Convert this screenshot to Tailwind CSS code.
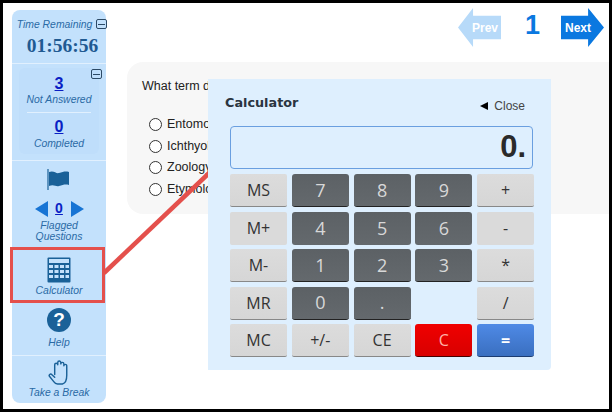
<!DOCTYPE html>
<html lang="en">
<head>
  <meta charset="UTF-8" />
  <title>Calculator</title>
  <script src="https://cdn.jsdelivr.net/npm/@tailwindcss/browser@4"></script>
</head>
<body class="bg-black font-['Liberation_Sans',sans-serif]">
  <div class="relative w-[612px] h-[412px] overflow-hidden">
    <div class="absolute inset-[3px] bg-white"></div>

    <!-- Page -->
    <div class="relative flex w-[612px] h-[412px] pt-[10px] pl-[12px] pr-[3px]">

      <!-- Sidebar -->
      <aside class="w-[94px] h-[393px] shrink-0 flex flex-col items-center rounded-lg bg-[#c3e1fc] text-[#2a6aa5] italic text-[10.400px] leading-[11px]">
        <div class="w-full h-[54px] border-b border-[#e1f0fe] relative flex flex-col items-center">
          <span class="mt-[9px] -ml-[9px]">Time Remaining</span>
          <span class="absolute -right-[1px] top-[9px] w-[11px] h-[10px] border border-[#2c4a66] rounded-[2px] flex items-center justify-center"><span class="w-[7px] h-px bg-[#2c4a66]"></span></span>
          <span class="mt-[6px] ml-[7px] not-italic font-bold font-['Liberation_Serif',serif] text-[19.500px] leading-[20px] text-[#1f5a92]">01:56:56</span>
        </div>
        <div class="w-full h-[97px] border-b border-[#e1f0fe] relative px-[7px] pt-[4px]">
          <div class="h-[86px] rounded-md bg-[#bfdefb] flex flex-col items-center">
            <a href="#" class="mt-[7px] not-italic font-bold text-[16px] leading-[18px] text-[#0a1fc4] underline">3</a>
            <span class="mt-[1px] text-[#2a6aa5]">Not Answered</span>
            <span class="w-[64px] h-px bg-[#e1f0fe] mt-[7px]"></span>
            <a href="#" class="mt-[5px] not-italic font-bold text-[16px] leading-[18px] text-[#0a1fc4] underline">0</a>
            <span class="mt-[2px]">Completed</span>
          </div>
          <span class="absolute right-[4px] top-[5px] w-[11px] h-[10px] border border-[#2c4a66] rounded-[2px] flex items-center justify-center"><span class="w-[7px] h-px bg-[#2c4a66]"></span></span>
        </div>
        <div class="w-full h-[86px] flex flex-col items-center pt-[8px]">
          <svg width="24" height="21" viewBox="0 0 24 21"><path d="M1 0v21" stroke="#1a6198" stroke-width="1.2"/><path d="M2 3c5-2 7 2 10 1 4-1 6-2 10-1v13c-4-1-6 0-10 1-3 1-5-2-10 0z" fill="#1a6198"/></svg>
          <div class="flex items-center gap-[3px] mt-[10px] h-[17px]">
            <span class="w-0 h-0 border-y-[8px] border-y-transparent border-r-[13px] border-r-[#1774d4]"></span>
            <a href="#" class="w-[17px] text-center not-italic font-bold text-[14px] text-[#0a1fc4] underline">0</a>
            <span class="w-0 h-0 border-y-[8px] border-y-transparent border-l-[13px] border-l-[#1774d4]"></span>
          </div>
          <span class="mt-[4px] text-center leading-[10.500px]">Flagged<br />Questions</span>
        </div>
        <div class="w-full h-[54px] mt-[3px] flex flex-col items-center pt-[7px]">
          <svg width="24" height="26" viewBox="0 0 24 26"><rect x="0.500" y="0.500" width="23" height="25" rx="1" fill="#1a6198"/><rect x="2" y="2" width="20" height="4" fill="#c3e1fc"/><g fill="#c3e1fc"><rect x="2" y="8" width="4" height="3"/><rect x="7.500" y="8" width="4" height="3"/><rect x="13" y="8" width="4" height="3"/><rect x="18.500" y="8" width="3.500" height="3"/><rect x="2" y="13" width="4" height="3"/><rect x="7.500" y="13" width="4" height="3"/><rect x="13" y="13" width="4" height="3"/><rect x="18.500" y="13" width="3.500" height="3"/><rect x="2" y="18" width="4" height="3"/><rect x="7.500" y="18" width="4" height="3"/><rect x="13" y="18" width="4" height="3"/><rect x="18.500" y="18" width="3.500" height="3"/></g></svg>
          <span class="mt-[2px]">Calculator</span>
        </div>
        <div class="w-full h-[50px] mt-[2px] border-b border-[#e1f0fe] flex flex-col items-center pt-[2px]">
          <span class="w-[24px] h-[24px] rounded-full bg-[#1a6198] text-white not-italic font-bold text-[19px] leading-[24px] text-center">?</span>
          <span class="mt-[5px]">Help</span>
        </div>
        <div class="w-full flex flex-col items-center pt-[4px]">
          <svg width="22" height="25" viewBox="0 0 23 26" fill="none" stroke="#1a6198" stroke-width="1.500" stroke-linejoin="round" stroke-linecap="round"><path d="M7 15V5a1.600 1.600 0 0 1 3.200 0V2.600a1.600 1.600 0 0 1 3.200 0V4a1.600 1.600 0 0 1 3.200 0v2a1.500 1.500 0 0 1 3 0v10c0 5-2 8.500-4.500 9H10c-2 0-3-1-4-2.500L1.500 17c-1-1.500 1-3 2.300-2L7 18"/></svg>
          <span class="mt-[2px]">Take a Break</span>
        </div>
      </aside>

      <!-- Main -->
      <main class="flex-1 relative">
        <div class="flex items-start h-[54px] -mt-[2px]">
          <a href="#" class="ml-[352px] w-[43px] h-[39px] flex items-center justify-end pr-[3px] bg-[#b7daf9] text-white font-bold text-[12px] [clip-path:polygon(0_50%,35%_0,35%_20%,100%_20%,100%_80%,35%_80%,35%_100%)]">Prev</a>
          <span class="ml-[24px] w-[11px] font-bold text-[27px] leading-[35px] text-[#0a78e0]">1</span>
          <a href="#" class="ml-[25px] w-[43px] h-[39px] flex items-center pl-[4px] bg-[#0a78e0] text-white font-bold text-[12px] [clip-path:polygon(0_20%,63%_20%,63%_0,100%_50%,63%_100%,63%_80%,0_80%)]">Next</a>
        </div>
        <section class="ml-[21px] h-[152px] rounded-l-2xl bg-[#f7f7f7] pl-[15px] pt-[15px] text-[12.500px] text-[#222] overflow-hidden">
          <p class="leading-[18px]">What term describes the study of insects?</p>
          <ul class="mt-[23px] ml-[7px] flex flex-col gap-[8.700px] leading-[13px]">
            <li class="flex items-center gap-[5px]"><span class="w-[13px] h-[13px] rounded-full border border-[#333] bg-white"></span>Entomology</li>
            <li class="flex items-center gap-[5px]"><span class="w-[13px] h-[13px] rounded-full border border-[#333] bg-white"></span>Ichthyology</li>
            <li class="flex items-center gap-[5px]"><span class="w-[13px] h-[13px] rounded-full border border-[#333] bg-white"></span>Zoology</li>
            <li class="flex items-center gap-[5px]"><span class="w-[13px] h-[13px] rounded-full border border-[#333] bg-white"></span>Etymology</li>
          </ul>
        </section>
      </main>
    </div>

    <!-- Callout line -->
    <svg class="absolute left-0 top-0" width="612" height="412" viewBox="0 0 612 412"><path d="M104 273L227 156" stroke="#e4504c" stroke-width="4.500"/></svg>

    <!-- Calculator dialog -->
    <div class="absolute left-[208px] top-[79px] w-[343px] h-[291px] bg-[#deeffe] pl-[22px] rounded-br-sm">
      <div class="flex items-center justify-between h-[47px] pr-[26px]">
        <h2 class="font-['DejaVu_Sans',sans-serif] font-bold text-[12.800px] text-[#2a3440] -ml-[5px]">Calculator</h2>
        <span class="flex items-center gap-[6px] text-[12px] text-[#444] mt-[6px]"><span class="w-0 h-0 border-y-[4.500px] border-y-transparent border-r-[8px] border-r-black"></span>Close</span>
      </div>
      <div class="w-[303px] h-[43px] border border-[#6a9fe0] rounded-[4px] flex items-center justify-end pr-[6px] font-bold text-[31px] text-[#2a2a2a]">0.</div>
      <div class="mt-[5px] grid grid-cols-[repeat(5,57px)] auto-rows-[33px] gap-x-[4.800px] gap-y-[4.500px] font-['Open_Sans',sans-serif] text-[16px]">
        <button class="rounded-[2px] border-b border-[#888] bg-gradient-to-b from-[#dcdcdc] to-[#d6d6d6] text-[#333]">MS</button>
        <button class="rounded-[3px] border-b border-[#222] bg-gradient-to-b from-[#5c6165] to-[#64696d] text-[#d8d8d8] text-[18px]">7</button>
        <button class="rounded-[3px] border-b border-[#222] bg-gradient-to-b from-[#5c6165] to-[#64696d] text-[#d8d8d8] text-[18px]">8</button>
        <button class="rounded-[3px] border-b border-[#222] bg-gradient-to-b from-[#5c6165] to-[#64696d] text-[#d8d8d8] text-[18px]">9</button>
        <button class="rounded-[2px] border-b border-[#888] bg-gradient-to-b from-[#dcdcdc] to-[#d6d6d6] text-[#333]">+</button>

        <button class="rounded-[2px] bg-[#dadada] text-[#333]">M+</button>
        <button class="rounded-[3px] bg-gradient-to-b from-[#5c6165] to-[#64696d] text-[#d8d8d8] text-[18px]">4</button>
        <button class="rounded-[3px] bg-gradient-to-b from-[#5c6165] to-[#64696d] text-[#d8d8d8] text-[18px]">5</button>
        <button class="rounded-[3px] bg-gradient-to-b from-[#5c6165] to-[#64696d] text-[#d8d8d8] text-[18px]">6</button>
        <button class="rounded-[2px] bg-[#dadada] text-[#333]">-</button>

        <button class="rounded-[2px] border-b border-[#888] bg-gradient-to-b from-[#dcdcdc] to-[#d6d6d6] text-[#333]">M-</button>
        <button class="rounded-[3px] border-b border-[#222] bg-gradient-to-b from-[#5c6165] to-[#64696d] text-[#d8d8d8] text-[18px]">1</button>
        <button class="rounded-[3px] border-b border-[#222] bg-gradient-to-b from-[#5c6165] to-[#64696d] text-[#d8d8d8] text-[18px]">2</button>
        <button class="rounded-[3px] border-b border-[#222] bg-gradient-to-b from-[#5c6165] to-[#64696d] text-[#d8d8d8] text-[18px]">3</button>
        <button class="rounded-[2px] border-b border-[#888] bg-gradient-to-b from-[#dcdcdc] to-[#d6d6d6] text-[#333]">*</button>

        <button class="rounded-[2px] border-b border-[#888] bg-gradient-to-b from-[#dcdcdc] to-[#d6d6d6] text-[#333]">MR</button>
        <button class="rounded-[3px] border-b border-[#222] bg-gradient-to-b from-[#5c6165] to-[#64696d] text-[#d8d8d8] text-[18px]">0</button>
        <button class="rounded-[3px] border-b border-[#222] bg-gradient-to-b from-[#5c6165] to-[#64696d] text-[#d8d8d8] text-[18px]">.</button>
        <span></span>
        <button class="rounded-[2px] border-b border-[#888] bg-gradient-to-b from-[#dcdcdc] to-[#d6d6d6] text-[#333]">/</button>

        <button class="rounded-[2px] border-b border-[#888] bg-gradient-to-b from-[#dcdcdc] to-[#d6d6d6] text-[#333]">MC</button>
        <button class="rounded-[2px] border-b border-[#888] bg-gradient-to-b from-[#dcdcdc] to-[#d6d6d6] text-[#333]">+/-</button>
        <button class="rounded-[2px] border-b border-[#888] bg-gradient-to-b from-[#dcdcdc] to-[#d6d6d6] text-[#333]">CE</button>
        <button class="rounded-[3px] border-b border-[#400] bg-gradient-to-b from-[#f00000] to-[#d80000] text-[#ffb0a8]">C</button>
        <button class="rounded-[3px] border-b border-[#1c3c70] bg-gradient-to-b from-[#4f8ae6] to-[#3a6fc0] text-white font-bold">=</button>
      </div>
    </div>

    <!-- Red highlight on sidebar calculator -->
    <div class="absolute left-[10px] top-[247px] w-[95px] h-[56px] border-[3.500px] border-[#e4504c]"></div>
  </div>
</body>
</html>
